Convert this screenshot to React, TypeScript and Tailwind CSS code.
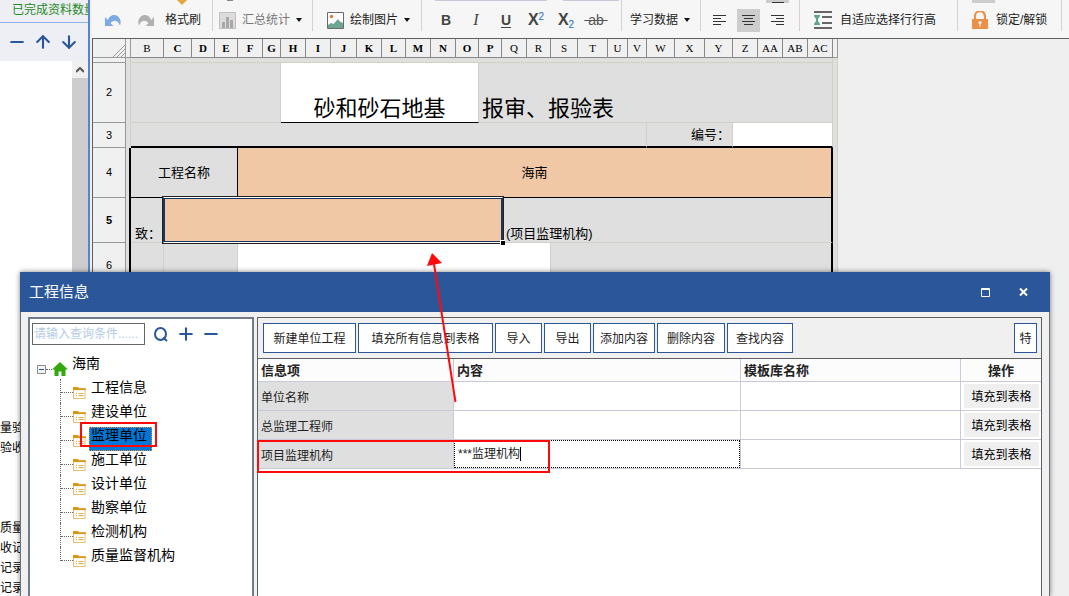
import { useState } from "react";
import type { ReactNode } from "react";
import { ArrowDown, ArrowUp, Minus, Plus } from "lucide-react";

interface IColumn {
  name: string;
  width: number;
  bold?: boolean;
}

const columns: IColumn[] = [
  { name: "B", width: 33 },
  { name: "C", width: 28, bold: true },
  { name: "D", width: 23, bold: true },
  { name: "E", width: 23, bold: true },
  { name: "F", width: 25, bold: true },
  { name: "G", width: 18, bold: true },
  { name: "H", width: 25, bold: true },
  { name: "I", width: 25, bold: true },
  { name: "J", width: 26, bold: true },
  { name: "K", width: 25, bold: true },
  { name: "L", width: 24, bold: true },
  { name: "M", width: 25, bold: true },
  { name: "N", width: 25, bold: true },
  { name: "O", width: 23, bold: true },
  { name: "P", width: 23, bold: true },
  { name: "Q", width: 25 },
  { name: "R", width: 24 },
  { name: "S", width: 27 },
  { name: "T", width: 30 },
  { name: "U", width: 20 },
  { name: "V", width: 19 },
  { name: "W", width: 28 },
  { name: "X", width: 30 },
  { name: "Y", width: 28 },
  { name: "Z", width: 25 },
  { name: "AA", width: 25 },
  { name: "AB", width: 25 },
  { name: "AC", width: 25 },
];

const units = ["工程信息", "建设单位", "监理单位", "施工单位", "设计单位", "勘察单位", "检测机构", "质量监督机构"];

const actions = [
  { label: "新建单位工程", width: "w-[93px]" },
  { label: "填充所有信息到表格", width: "w-[135px]" },
  { label: "导入", width: "w-[47px]" },
  { label: "导出", width: "w-[47px]" },
  { label: "添加内容", width: "w-[62px]" },
  { label: "删除内容", width: "w-[68px]" },
  { label: "查找内容", width: "w-[66px]" },
];

const Caret = () => (
  <svg width="6" height="4" viewBox="0 0 6 4" className="shrink-0">
    <path d="M0 0h6L3 4z" fill="#111" />
  </svg>
);

const UndoIcon = ({ color, flip }: { color: string; flip?: boolean }) => (
  <svg width="17" height="13" viewBox="0 0 17 13" className={flip ? "-scale-x-100" : ""}>
    <path d="M0 3v9h8.500L5.600 9.200C8 6 12.500 5.500 15 11.500 17.500 5.500 12.500-.5 7.500 1.200 5 2 3.800 3.800 2.800 6z" fill={color} />
  </svg>
);

const ChartIcon = () => (
  <svg width="17" height="17" viewBox="0 0 17 17">
    <path d="M.5.5h16v16H.5z" fill="#dcdcdc" stroke="#c0c0c0" />
    <path d="M3 10h3v6H3zM7 5h3v11H7zM11 8h3v8h-3z" fill="#a8a8a8" />
  </svg>
);

const PictureIcon = () => (
  <svg width="17" height="17" viewBox="0 0 17 17">
    <path d="M.5.5h16v16H.5z" fill="#fff" stroke="#6a6a6a" />
    <circle cx="4.500" cy="4.500" r="1.700" fill="#e07b28" />
    <path d="M1 16v-3l3-2 2.500 1L11 7l2 2.500L16 11v5z" fill="#6fa594" />
  </svg>
);

const AlignIcon = ({ lines }: { lines: number[][] }) => (
  <svg width="13" height="11" viewBox="0 0 13 11">
    {lines.map(([x, w], i) => (
      <rect key={i} x={x} y={i * 3} width={w} height="1" fill="#333" />
    ))}
  </svg>
);

const RowHeightIcon = () => (
  <svg width="18" height="18" viewBox="0 0 18 18">
    <path d="M0 0h18v2H0zM0 16h18v2H0zM8 5h10v2H8zM8 11h10v2H8z" fill="#666" />
    <path d="M0 4h6v1L4 8v2l2 3v1H0v-1l2-3V8L0 5z" fill="#5fa28d" />
  </svg>
);

const LockIcon = () => (
  <svg width="16" height="18" viewBox="0 0 16 18">
    <path d="M3 9V5a4 3.800 0 0 1 10 0v4" fill="none" stroke="#e8914a" strokeWidth="2.200" />
    <path d="M0 8h16v10H0z" fill="#e8914a" />
    <path d="M6.500 10.500h3v2h-1v3h-1v-3h-1z" fill="#fff" />
  </svg>
);

const SearchIcon = () => (
  <svg width="14" height="15" viewBox="0 0 14 15" fill="none" stroke="#2b579a" strokeWidth="2">
    <ellipse cx="6.500" cy="7" rx="5.500" ry="6" />
    <path d="M9 10.500l4 3.500" />
  </svg>
);

const HomeIcon = () => (
  <svg width="16" height="14" viewBox="0 0 16 14">
    <path d="M8 0l8 7.500h-2.500V14H9.500V9.500h-3V14h-4V7.500H0z" fill="#32a80c" />
  </svg>
);

const FolderIcon = () => (
  <svg width="13" height="12" viewBox="0 0 13 12">
    <path d="M.5 1.500h11.500v10H.5z" fill="#fff" stroke="#e8bd72" />
    <path d="M0 0h5l1 1.500h7V3H0z" fill="#dc9414" />
    <path d="M3 6.500h1M3 8.500h1M5.500 6.500h5M5.500 8.500h5" stroke="#e3a94d" />
  </svg>
);

// The strip on top holds what is left of the ribbon row scrolled out above
const Group = ({ className, strip, children }: { className: string; strip?: ReactNode; children: ReactNode }) => (
  <div className={`flex h-[31px] shrink-0 flex-col border-r border-[#d2d2d2] ${className}`}>
    <div className="flex h-1.5 shrink-0 items-start">{strip}</div>
    <div className="flex h-7 shrink-0 items-center">{children}</div>
  </div>
);

const Toolbar = () => (
  <div className="flex h-[39px] shrink-0 overflow-hidden whitespace-nowrap border-b border-[#606060] bg-[#f6f6f6] text-xs text-[#222]">
    <Group
      className="w-[121px] pl-[5px]"
      strip={
        <svg width="10" height="5" viewBox="0 0 10 5" className="ml-20">
          <path d="M0 0h10L5 5z" fill="#e3a83c" />
        </svg>
      }
    >
      <button aria-label="撤销" className="flex w-8 justify-center"><UndoIcon color="#7fa9e3" /></button>
      <button aria-label="重做" className="flex w-8 justify-center"><UndoIcon color="#b0b0b0" flip /></button>
      <button className="pl-1">格式刷</button>
    </Group>
    <Group className="w-[100px] pl-1.5" strip={<span className="ml-2 h-px w-1.5 bg-[#888]" />}>
      <button className="flex items-center gap-1.5 text-[#777]">
        <ChartIcon />
        汇总统计
        <Caret />
      </button>
    </Group>
    <Group className="w-[109px] pl-3.5">
      <button className="flex items-center gap-1.5">
        <PictureIcon />
        绘制图片
        <Caret />
      </button>
    </Group>
    <Group
      className="w-[200px] pl-[9px]"
      strip={
        <>
          <span className="ml-1 h-px w-28 bg-[#c8c8dc]" />
          <span className="ml-4 h-px w-14 bg-[#c8c8dc]" />
        </>
      }
    >
      <button className="w-[30px] text-sm font-bold text-[#444]">B</button>
      <button className="w-[30px] font-['Liberation_Serif',serif] text-base italic text-[#444]">I</button>
      <button className="w-[30px] text-sm font-bold text-[#444] underline underline-offset-2">U</button>
      <button className="w-[30px] text-base font-bold leading-4 text-[#444]">
        X<sup className="text-[10px] font-normal text-[#2b6cb8]">2</sup>
      </button>
      <button className="w-[30px] text-base font-bold leading-4 text-[#444]">
        X<sub className="text-[10px] font-normal text-[#2b6cb8]">2</sub>
      </button>
      <button className="w-[30px] text-sm text-[#555] line-through">&nbsp;ab&nbsp;</button>
    </Group>
    <Group className="w-[79px] pl-2">
      <button className="flex items-center gap-1.5">
        学习数据
        <Caret />
      </button>
    </Group>
    <Group
      className="w-[99px] pl-[7px]"
      strip={<span className="ml-[58px] flex h-[3px] w-[23px] justify-center bg-[#cdcdcd]"><i className="mt-0.5 h-px w-3 bg-[#333]" /></span>}
    >
      <div className="flex gap-1.5">
        <button aria-label="左对齐" className="flex size-[23px] items-center justify-center">
          <AlignIcon lines={[[0, 13], [0, 8], [0, 13], [0, 8]]} />
        </button>
        <button aria-label="居中" className="flex size-[23px] items-center justify-center bg-[#cdcdcd]">
          <AlignIcon lines={[[0, 13], [2, 9], [0, 13], [2, 9]]} />
        </button>
        <button aria-label="右对齐" className="flex size-[23px] items-center justify-center">
          <AlignIcon lines={[[0, 13], [5, 8], [0, 13], [5, 8]]} />
        </button>
      </div>
    </Group>
    <Group className="w-[158px] pl-3.5">
      <button className="flex items-center gap-2">
        <RowHeightIcon />
        自适应选择行行高
      </button>
    </Group>
    <Group className="w-[104px] pl-3.5" strip={<span className="h-[3px] w-[23px] bg-[#cdcdcd]" />}>
      <button className="flex items-center gap-2">
        <LockIcon />
        锁定/解锁
      </button>
    </Group>
  </div>
);

const RowHead = ({ children, bold }: { children?: ReactNode; bold?: boolean }) => (
  <th className={`overflow-hidden border-b border-r border-[#999] bg-[#f0f0f0] text-[11px] ${bold ? "font-bold" : "font-normal"}`}>
    {children}
  </th>
);

const Edge = ({ black }: { black?: boolean }) => (
  <td className={black ? "border-r-2 border-black bg-[#dfdfdf]" : "border-r border-[#d4d0c8] bg-[#dfdfdf]"} />
);

const Sheet = () => (
  <div className="min-h-0 flex-1 overflow-hidden border-l border-[#606060] bg-[#efefef]">
    <table className="w-[745px] table-fixed border-separate border-spacing-0 text-xs leading-none text-black">
      <colgroup>
        <col className="w-[33px]" />
        <col className="w-[5px]" />
        {columns.map((c) => (
          <col key={c.name} style={{ width: c.width }} />
        ))}
        <col className="w-[5px]" />
      </colgroup>
      <thead>
        <tr className="h-[19px] bg-[#f0f0f0] font-['Liberation_Serif',serif] text-[11px]">
          <th className="border-b border-r border-[#999]">
            <svg width="12" height="12" viewBox="0 0 12 12" className="ml-auto mt-1.5" stroke="#999">
              <path d="M0 12L12 0M4 12l8-8M8 12l4-4" />
            </svg>
          </th>
          <th className="border-b border-r border-[#999]" />
          {columns.map((c) => (
            <th key={c.name} className={`border-b border-r border-[#888] ${c.bold ? "font-bold" : "font-normal"}`}>
              {c.name}
            </th>
          ))}
          <th className="border-b border-r border-[#999]" />
        </tr>
      </thead>
      <tbody>
        <tr className="h-[5px] text-[0px]">
          <RowHead />
          <Edge />
          <td colSpan={28} className="border-b border-r border-[#d4d0c8] bg-[#dfdfdf]" />
          <Edge />
        </tr>
        <tr className="h-[60px]">
          <RowHead>2</RowHead>
          <Edge />
          <td colSpan={6} className="border-b border-r border-[#d4d0c8] bg-[#dfdfdf]" />
          <td colSpan={8} className="whitespace-nowrap border-b border-r border-b-black border-r-[#d4d0c8] bg-white pb-0.5 text-center align-bottom text-[22px]">
            砂和砂石地基
          </td>
          <td colSpan={14} className="whitespace-nowrap border-b border-r border-[#d4d0c8] bg-[#dfdfdf] pb-0.5 pl-[3px] align-bottom text-[22px]">
            报审、报验表
          </td>
          <Edge />
        </tr>
        <tr className="h-[25px]">
          <RowHead>3</RowHead>
          <Edge />
          <td colSpan={21} className="border-b-2 border-r border-b-black border-r-[#d4d0c8] bg-[#dfdfdf]" />
          <td colSpan={3} className="border-b-2 border-r border-b-black border-r-[#d4d0c8] bg-[#dfdfdf] pr-0.5 text-right text-[13px]">
            编号：
          </td>
          <td colSpan={4} className="border-b-2 border-r border-b-black border-r-[#d4d0c8] bg-white" />
          <Edge />
        </tr>
        <tr className="h-[50px] text-[13px]">
          <RowHead>4</RowHead>
          <Edge black />
          <td colSpan={4} className="border-b border-r border-black bg-[#dfdfdf] text-center">工程名称</td>
          <td colSpan={24} className="border-b border-r-2 border-black bg-[#f0c8a5] text-center">海南</td>
          <Edge />
        </tr>
        <tr className="h-[45px] text-[13px]">
          <RowHead bold>5</RowHead>
          <Edge black />
          <td className="whitespace-nowrap border-b border-[#d4d0c8] bg-[#dfdfdf] pb-0.5 pl-1 align-bottom">致：</td>
          <td colSpan={14} className="relative bg-[#f0c8a5]">
            {/* selected cell */}
            <div className="absolute -inset-x-0.5 -bottom-px -top-0.5 border border-[#222]">
              <div className="h-full border border-x-[#17365d] border-y-white">
                <div className="h-full border border-[#17365d]" />
              </div>
            </div>
            <span className="absolute -bottom-0.5 -right-[3px] size-[5px] border-l border-t border-white bg-black" />
          </td>
          <td colSpan={13} className="border-b border-r-2 border-b-[#d4d0c8] border-r-black bg-[#dfdfdf] pb-0.5 pl-1 align-bottom">
            (项目监理机构)
          </td>
          <Edge />
        </tr>
        <tr className="h-[45px]">
          <RowHead>6</RowHead>
          <Edge black />
          <td className="border-r border-[#d4d0c8] bg-[#dfdfdf]" />
          <td colSpan={3} className="border-r border-[#d4d0c8] bg-[#dfdfdf]" />
          <td colSpan={13} className="border-r border-[#d4d0c8] bg-white" />
          <td colSpan={11} className="border-r-2 border-black bg-[#dfdfdf]" />
          <Edge />
        </tr>
      </tbody>
    </table>
  </div>
);

const SidePanel = () => (
  <aside className="mr-0.5 flex w-[90px] shrink-0 flex-col overflow-hidden whitespace-nowrap border-r-2 border-[#5585cc] bg-[#eeeef5]">
    <div className="h-[23px] shrink-0 border-b border-[#8db4e8] pl-3 text-xs leading-5 text-[#1f8a1f]">已完成资料数量</div>
    <div className="flex h-[38px] shrink-0 items-center justify-end pr-1.5 text-[#2b579a]">
      <button aria-label="删除" className="flex w-[26px] justify-center"><Minus size={20} strokeWidth={2.5} /></button>
      <button aria-label="上移" className="flex w-[26px] justify-center"><ArrowUp size={20} strokeWidth={2.5} /></button>
      <button aria-label="下移" className="flex w-[26px] justify-center"><ArrowDown size={20} strokeWidth={2.5} /></button>
    </div>
    <div className="flex min-h-0 flex-1">
      <ul className="min-w-0 flex-1 overflow-hidden bg-white pt-[357px] text-xs leading-5 text-black">
        <li>量验</li>
        <li className="mb-15">验收</li>
        <li>质量</li>
        <li>收记</li>
        <li>记录</li>
        <li>记录</li>
      </ul>
      <div className="w-4 bg-[#cdcdcd]">
        <div className="flex h-[17px] items-center justify-center bg-[#f0f0f0]">
          <svg width="8" height="6" viewBox="0 0 8 6" fill="none" stroke="#555" strokeWidth="2">
            <path d="M0 5l4-4 4 4" />
          </svg>
        </div>
      </div>
    </div>
  </aside>
);

const Tree = ({ selected, onSelect }: { selected: string; onSelect: (name: string) => void }) => (
  <div className="w-[226px] shrink-0 border-2 border-b-0 border-[#6f7b88] bg-white">
    <div className="flex items-center pl-0.5 pt-1">
      <input
        aria-label="查询条件"
        placeholder="请输入查询条件......"
        className="h-[22px] w-[113px] border border-[#666] pl-px text-xs text-black placeholder:text-[#b3cbe6]"
      />
      <button aria-label="查询" className="ml-1 flex w-6 justify-center"><SearchIcon /></button>
      <button aria-label="添加" className="flex w-[26px] justify-center text-[#2b579a]"><Plus size={20} strokeWidth={2.5} /></button>
      <button aria-label="移除" className="flex w-6 justify-center text-[#2b579a]"><Minus size={20} strokeWidth={2.5} /></button>
    </div>
    <div className="mt-2.5 flex h-6 pl-[7px]">
      <span className="flex items-center pt-1">
        <svg width="9" height="9" viewBox="0 0 9 9">
          <path d="M.5.5h8v8h-8z" fill="#f4f4f4" stroke="#8a8a8a" />
          <path d="M2 4.500h5" stroke="#2b579a" />
        </svg>
        <span className="w-1.5 border-b border-dotted border-[#666]" />
        <HomeIcon />
      </span>
      <span className="ml-1 text-sm leading-4 text-black">海南</span>
    </div>
    <ul>
      {units.map((name, i) => (
        <li key={name} className="flex h-6 pl-[30px]">
          <span className={`border-l border-dotted border-[#666] ${i === units.length - 1 ? "h-3.5" : "h-6"}`} />
          <span className="h-3.5 w-3 border-b border-dotted border-[#666]" />
          <span className="self-end pb-1"><FolderIcon /></span>
          <button
            onClick={() => onSelect(name)}
            className={`ml-[3px] flex h-6 items-start border border-dotted pl-px pr-1 text-sm leading-[14px] text-black ${
              name === selected ? "border-[#e08a3c] bg-[#0078d7]" : "border-transparent"
            }`}
          >
            {name}
          </button>
        </li>
      ))}
    </ul>
  </div>
);

const InfoTable = () => {
  const [content, setContent] = useState<string>("***监理机构");
  const cell = "border-b border-r border-[#c9c9dc]";

  return (
    <table className="w-full table-fixed border-separate border-spacing-0 bg-white text-xs text-[#222]">
      <colgroup>
        <col className="w-[196px]" />
        <col />
        <col className="w-[220px]" />
        <col className="w-20" />
      </colgroup>
      <thead>
        <tr className="h-[23px] bg-[#fcfcfc] text-left text-[13px] leading-none">
          <th className="border-b border-r border-[#c9c9dc] pl-[3px]">信息项</th>
          <th className="border-b border-r border-[#c9c9dc] pl-[3px]">内容</th>
          <th className="border-b border-r border-[#c9c9dc] pl-[3px]">模板库名称</th>
          <th className="border-b border-[#c9c9dc] text-center">操作</th>
        </tr>
      </thead>
      <tbody>
        {["单位名称", "总监理工程师", "项目监理机构"].map((name) => (
          <tr key={name} className="h-[29px]">
            <td className="border-b border-r border-[#c9c9dc] bg-[#dfdfdf] pl-[3px] pt-[3px]">{name}</td>
            <td className={cell}>
              {name === "项目监理机构" && (
                <div className="flex h-7 items-center border border-dotted border-black pl-[3px]">
                  <input
                    aria-label={name}
                    value={content}
                    onChange={(e) => setContent(e.target.value)}
                    className="field-sizing-content text-xs text-[#222] outline-none"
                  />
                  <span className="h-3.5 w-px bg-black" />
                </div>
              )}
            </td>
            <td className={cell} />
            <td className="border-b border-[#c9c9dc] pl-[3px] pr-0.5">
              <button className="block h-6 w-full bg-[#efefef] pt-0.5 text-xs text-black">填充到表格</button>
            </td>
          </tr>
        ))}
      </tbody>
    </table>
  );
};

const InfoDialog = () => {
  const [selected, setSelected] = useState<string>("监理单位");

  return (
    <section className="absolute bottom-0 left-5 right-[19px] top-[272px] flex flex-col bg-[#f0f0f0] shadow-[0_0_5px_rgba(0,0,0,0.5)]">
      <header className="flex h-10 shrink-0 items-center bg-[#2b579a] pl-[9px] pr-2 text-white">
        <h1 className="flex-1 text-[15px]">工程信息</h1>
        <button aria-label="最大化" className="flex w-[38px] justify-center">
          <svg width="9" height="9" viewBox="0 0 9 9" fill="none" stroke="#fff">
            <path d="M.5.5h8v8h-8zM0 1.500h9" />
          </svg>
        </button>
        <button aria-label="关闭" className="flex w-[38px] justify-center">
          <svg width="9" height="8" viewBox="0 0 9 8" stroke="#fff" strokeWidth="2">
            <path d="M1 .5l7 7M8 .5l-7 7" />
          </svg>
        </button>
      </header>
      <div className="flex min-h-0 flex-1 gap-[3px] border-x border-[#66727f] px-[7px] pt-[5px]">
        <Tree selected={selected} onSelect={setSelected} />
        <div className="min-w-0 flex-1 border border-b-0 border-[#5f5f5f] bg-white">
          <div className="flex h-[41px] items-center gap-0.5 border-b border-[#5f5f5f] bg-[#f0f0f0] pl-[5px] pr-1 text-xs text-[#222]">
            {actions.map((a) => (
              <button key={a.label} className={`h-[30px] shrink-0 border border-[#2b579a] bg-white pt-0.5 ${a.width}`}>
                {a.label}
              </button>
            ))}
            <button className="ml-auto h-[30px] w-[23px] shrink-0 border border-[#2b579a] bg-white pt-0.5">特</button>
          </div>
          <InfoTable />
        </div>
      </div>
    </section>
  );
};

// Red marks drawn over the whole window
const Marks = () => (
  <svg className="pointer-events-none absolute left-0 top-0" width="560" height="480" viewBox="0 0 560 480" fill="none" stroke="#ff0a0a" strokeWidth="2">
    <path d="M455.500 402L434 264" />
    <path d="M432 253l10 10-15 3z" fill="#ff0a0a" stroke="none" />
    <rect x="81" y="423" width="75" height="23" />
    <rect x="258" y="441" width="291" height="31" />
  </svg>
);

export default function App() {
  return (
    <div className="relative flex h-screen w-full overflow-hidden bg-[#f0f0f0] font-['Liberation_Sans','Noto_Sans_CJK_SC',sans-serif]">
      <SidePanel />
      <main className="flex min-w-0 flex-1 flex-col">
        <Toolbar />
        <Sheet />
      </main>
      <InfoDialog />
      <Marks />
    </div>
  );
}
